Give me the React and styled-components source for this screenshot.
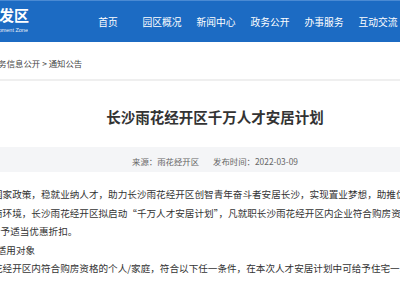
import React from "react";
import styled, { createGlobalStyle } from "styled-components";

const GlobalStyle = createGlobalStyle`
  html, body {
    margin: 0;
    padding: 0;
    background: #ffffff;
    overflow: hidden;
    font-family: "Noto Sans CJK SC", "Noto Sans", "Liberation Sans", sans-serif;
  }
  * { box-sizing: border-box; }
`;

const Page = styled.div`
  width: 400px;
  height: 300px;
  overflow: hidden;
`;

const Header = styled.header`
  height: 42px;
  background: #1c6bc3;
  border-top: 1px solid #4a8ad3;
  display: flex;
  align-items: center;
`;

const Logo = styled.div`
  flex: none;
  width: 80px;
  margin-left: -52px;
  display: flex;
  flex-direction: column;
  align-items: flex-end;
  color: #ffffff;
  white-space: nowrap;
`;

const LogoTitle = styled.div`
  font-size: 15px;
  font-weight: 700;
  line-height: 17px;
  margin-top: -4px;
  margin-right: -1px;
`;

const LogoSub = styled.div`
  font-family: "Liberation Sans", Arial, sans-serif;
  font-size: 5.5px;
  line-height: 7px;
  margin-top: 4px;
  opacity: 0.9;
`;

const Nav = styled.nav`
  flex: none;
  display: flex;
  margin-left: 53px;
`;

const NavItem = styled.a`
  width: 54px;
  flex: none;
  text-align: center;
  color: #ffffff;
  font-size: 9.75px;
  line-height: 12px;
  white-space: nowrap;
  text-decoration: none;
`;

const Crumbs = styled.div`
  height: 39px;
  display: flex;
  align-items: center;
  border-bottom: 2px solid #efefef;
  font-size: 8.4px;
  color: #444;
  white-space: nowrap;
`;

const CrumbText = styled.span`
  margin-left: -10px;
  margin-top: 4px;
`;

const Main = styled.main`
  width: 450px;
  margin-left: -10px;
`;

const Title = styled.h1`
  margin: 0;
  height: 66px;
  padding-top: 5px;
  display: flex;
  align-items: center;
  justify-content: center;
  font-size: 14.5px;
  font-weight: 700;
  color: #333333;
`;

const Meta = styled.div`
  height: 25px;
  background: #f4f5f7;
  display: flex;
  align-items: center;
  justify-content: center;
  gap: 14px;
  font-size: 8.4px;
  color: #666666;
  padding-top: 2px;
`;

const Body = styled.div`
  padding: 13px 0 0 3px;
  font-size: 9.6px;
  line-height: 18.5px;
  color: #333333;
`;

const Line = styled.p`
  margin: 0;
  white-space: nowrap;
  margin-left: ${(p) => p.$shift || 0}px;
`;

const navItems = ["首页", "园区概况", "新闻中心", "政务公开", "办事服务", "互动交流"];

export default function App() {
  return (
    <Page>
      <GlobalStyle />
      <Header>
        <Logo>
          <LogoTitle>开发区</LogoTitle>
          <LogoSub>Development Zone</LogoSub>
        </Logo>
        <Nav>
          {navItems.map((n) => (
            <NavItem key={n}>{n}</NavItem>
          ))}
        </Nav>
      </Header>
      <Crumbs>
        <CrumbText>政务信息公开 &gt; 通知公告</CrumbText>
      </Crumbs>
      <Main>
        <Title>长沙雨花经开区千万人才安居计划</Title>
        <Meta>
          <span>来源：雨花经开区</span>
          <span>发布时间：2022-03-09</span>
        </Meta>
        <Body>
          <Line>国家政策，稳就业纳人才，助力长沙雨花经开区创智青年奋斗者安居长沙，实现置业梦想，助推优化营</Line>
          <Line>商环境，长沙雨花经开区拟启动“千万人才安居计划”，凡就职长沙雨花经开区内企业符合购房资格的人才，</Line>
          <Line $shift={-2}>给予适当优惠折扣。</Line>
          <Line $shift={-25}>（一）适用对象</Line>
          <Line>花经开区内符合购房资格的个人/家庭，符合以下任一条件，在本次人才安居计划中可给予住宅一次</Line>
        </Body>
      </Main>
    </Page>
  );
}
